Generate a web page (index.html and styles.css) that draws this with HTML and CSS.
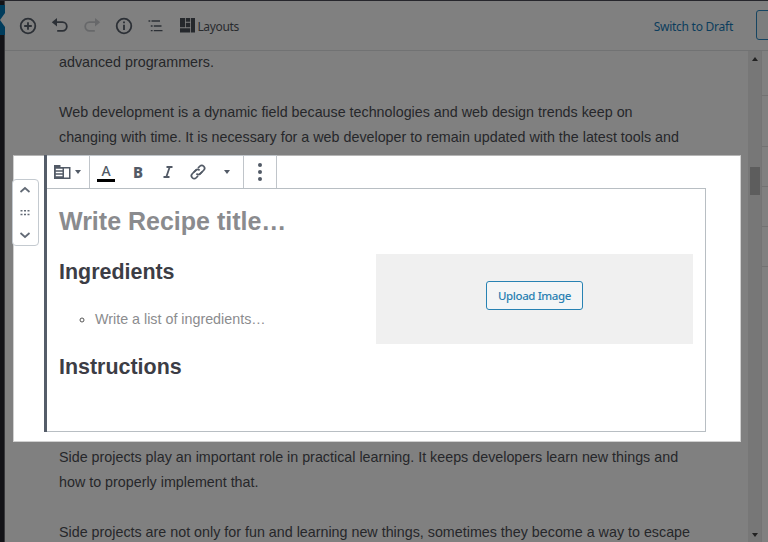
FILE: index.html
```html
<!DOCTYPE html>
<html lang="en">
<head>
<meta charset="utf-8">
<title>Edit Post</title>
<link rel="stylesheet" href="styles.css">
</head>
<body>
<div class="app">
  <div class="rail"><div class="rail-current"><i class="notch"></i></div></div>
  <div class="editor">
    <header class="topbar">
      <svg class="ico add" viewBox="0 0 18 18"><circle cx="9" cy="9" r="7.3"/><path d="M9 5.200v7.600M5.200 9h7.600"/></svg>
      <svg class="ico undo" viewBox="0 0 18 18"><path d="M5 5.200h6.500a4.100 4.100 0 0 1 0 8.600H6.200"/><path class="solid" d="M6 1v8.400L.8 5.200z"/></svg>
      <svg class="ico redo" viewBox="0 0 18 18"><path d="M13 5.200H6.500a4.100 4.100 0 0 0 0 8.600H11.800"/><path class="solid" d="M12 1v8.400l5.200-4.200z"/></svg>
      <svg class="ico info" viewBox="0 0 18 18"><circle cx="9" cy="9" r="7.300"/><path d="M9 7.800v5.300M9 4.500v1.800"/></svg>
      <svg class="ico outline" viewBox="0 0 18 18"><path d="M1.500 4h1.800M4.500 4h8.500M3.800 9h1.800M6.800 9h7.700M3.800 13.700h1.800M6.800 13.700h8.700"/></svg>
      <div class="layouts"><svg class="grid-ico" viewBox="0 0 15 15"><path d="M0 0h5v9.200H0zM5.800 0h4.400v3.800H5.800zM5.800 4.800h4.400v4.400H5.800zM0 10.200h10.200v4.300H0zM11 0h4v14.500h-4z"/></svg><span>Layouts</span></div>
      <span class="draft">Switch to Draft</span>
      <span class="preview"></span>
    </header>
    <div class="body">
      <main class="canvas">
        <p>advanced programmers.</p>
        <p>Web development is a dynamic field because technologies and web design trends keep on<br>changing with time. It is necessary for a web developer to remain updated with the latest tools and</p>
        <section class="spotlight">
          <div class="mover">
            <svg viewBox="0 0 12 8"><path d="M1.500 6L6 2l4.500 4"/></svg>
            <svg class="grip" viewBox="0 0 12 8"><path d="M1.500 1.800h2M5 1.800h2M8.500 1.800h2M1.500 5.500h2M5 5.500h2M8.500 5.500h2"/></svg>
            <svg viewBox="0 0 12 8"><path d="M1.500 2L6 6l4.500-4"/></svg>
          </div>
          <div class="block">
            <div class="toolbar">
              <div class="group type">
                <svg class="recipe" viewBox="0 0 17 15"><path class="solid" d="M0 0h6.500v2H16.500v12H0zM1.800 3.800v1.500h6.700V3.800zM1.800 6.800v1.500h6.700V6.800zM1.800 9.800v1.500h6.700V9.800zM10 3.500v9h5v-9z" fill-rule="evenodd"/></svg>
                <i class="caret"></i>
              </div>
              <div class="group format">
                <span class="color">A</span>
                <span class="bold">B</span>
                <svg class="italic" viewBox="0 0 10 12"><path d="M3.500 1h6M.5 11h6M6.700 1L3.300 11"/></svg>
                <svg class="link" viewBox="0 0 16 16"><g transform="rotate(-45 8 8)"><path d="M9 5.200H2.700a2.800 2.800 0 0 0 0 5.600h2.500M7 10.800h6.300a2.800 2.800 0 0 0 0-5.600h-2.500"/><path d="M5 5.200h2.600a2.800 2.800 0 0 1 2.700 2.800M11 10.800H8.400A2.800 2.800 0 0 1 5.700 8"/></g></svg>
                <i class="caret"></i>
              </div>
              <div class="group more"><i></i><i></i><i></i></div>
            </div>
            <div class="recipe-card">
              <h2 class="title">Write Recipe title…</h2>
              <div class="columns">
                <div class="text">
                  <h3>Ingredients</h3>
                  <ul><li>Write a list of ingredients…</li></ul>
                  <h3>Instructions</h3>
                </div>
                <div class="media"><span class="upload">Upload Image</span></div>
              </div>
            </div>
          </div>
        </section>
        <p>Side projects play an important role in practical learning. It keeps developers learn new things and<br>how to properly implement that.</p>
        <p>Side projects are not only for fun and learning new things, sometimes they become a way to escape</p>
      </main>
      <div class="scroll"><i class="up"></i><i class="thumb"></i><i class="down"></i></div>
      <aside class="side"><i></i><i></i><i></i><i></i><i></i></aside>
    </div>
  </div>
</div>
</body>
</html>
```
FILE: styles.css
```css
* { box-sizing: border-box; }
body { margin: 0; width: 768px; height: 542px; overflow: hidden; background: #808080; font-family: "Liberation Sans", Arial, sans-serif; }
svg { display: block; flex: none; overflow: visible; fill: none; stroke: currentColor; }
.solid { fill: currentColor; stroke: none; }

.app { display: flex; height: 542px; border-top: 1px solid #26262c; }
.rail { width: 5px; flex: none; background: #131317; border-right: 1px solid #38383b; padding-top: 4px; }
.rail-current { width: 5px; height: 30px; background: #003c5c; display: flex; align-items: center; justify-content: flex-end; }
.notch { border: 7px solid transparent; border-left: 0; border-right: 5px solid #808080; }
.editor { flex: 1; min-width: 0; display: flex; flex-direction: column; }

.topbar { height: 50px; flex: none; display: flex; align-items: center; border-bottom: 1px solid #717273; color: #2c3036; font: 13px "Noto Sans", sans-serif; padding-left: 14px; overflow: hidden; }
.ico { width: 18px; height: 18px; stroke-width: 1.8; margin-right: 14.100px; }
.redo { color: #67686a; }
.outline { stroke-width: 1.3; margin-right: 15px; }
.layouts { display: flex; align-items: center; gap: 2px; color: #292b2e; font-size: 12px; letter-spacing: -.350px; }
.layouts span, .draft { padding-top: 1px; }
.grid-ico { width: 15px; height: 15px; fill: #25282c; stroke: none; }
.draft { margin-left: auto; color: #0b3d5d; letter-spacing: -.250px; white-space: nowrap; font-size: 12px; }
.preview { width: 20px; height: 30px; flex: none; margin: -1px -8px 0 23px; border: 1px solid #164562; border-radius: 3px; background: #7c7e7e; }

.body { flex: 1; min-height: 0; display: flex; }
.canvas { width: 743px; flex: none; overflow: hidden; margin-top: -2px; padding-left: 54px; }
.canvas > p { margin: 0 0 25px; font-size: 14.300px; line-height: 25px; color: #26272a; white-space: nowrap; }
.canvas > p:first-child { padding-top: 1px; }
.canvas > p:nth-child(2) { margin-bottom: 5px; }

.spotlight { width: 728px; height: 287px; margin: 0 0 3px -46px; background: #fff; border: 1px solid #d0d0d0; border-top-color: #b5b5b5; display: flex; align-items: flex-start; }
.mover { width: 27px; height: 67px; margin: 23px 5px 0 -2px; border: 1px solid #c4cad0; border-radius: 4px; background: #fff; display: flex; flex-direction: column; align-items: center; justify-content: space-between; padding: 6px 0; color: #626a75; }
.mover svg { width: 12px; height: 8px; margin-right: 1px; stroke-width: 1.700; }
.mover .grip { stroke-width: 1.400; }
.block { width: 662px; height: 277px; margin-top: -1px; border-left: 3px solid #555d69; display: flex; flex-direction: column; }
.toolbar { display: flex; height: 33px; color: #525a66; }
.group { display: flex; align-items: center; border: 1px solid #c0c5ca; border-width: 1px 1px 0 0; }
.type { width: 43px; padding-left: 7px; gap: 4px; }
.recipe { width: 17px; height: 15px; }
.caret { border: 3px solid transparent; border-top: 4px solid currentColor; border-bottom: 0; }
.format { width: 154px; padding-left: 7px; }
.color { width: 18px; height: 18px; margin-top: 2px; border-bottom: 3px solid #000; font: 500 14px/13px "Noto Sans", sans-serif; text-align: center; }
.bold { margin-left: 18px; width: 10px; font: 800 15px/18px "Noto Sans", sans-serif; }
.italic { width: 10px; height: 12px; stroke-width: 1.800; margin: 0 17px 0 20px; }
.link { width: 16px; height: 16px; stroke-width: 1.700; margin-right: 18px; }
.more { width: 33px; flex-direction: column; justify-content: center; gap: 3px; }
.more i { width: 4px; height: 4px; border-radius: 50%; background: currentColor; }
.recipe-card { flex: 1; border: 1px solid #b8bec3; border-left-width: 0; padding: 15px 12px 0; color: #3c3d45; }
.title { margin: 0; font-size: 25px; line-height: 34px; color: #8a8b8e; }
.columns { display: flex; margin-top: 16px; }
.text { width: 317px; }
.text h3 { margin: 0; font-size: 21.450px; line-height: 36px; }
.text ul { margin: 17px 0 17px; padding-left: 36px; list-style: circle; font-size: 14.300px; line-height: 25px; color: #8b8c8e; }
.text li::marker { color: #555; }
.media { width: 317px; height: 90px; flex: none; background: #f0f0f0; display: flex; align-items: center; justify-content: center; padding-bottom: 7px; }
.upload { width: 97px; height: 29px; border: 1px solid #2782b3; border-radius: 3px; background: #f3f5f6; color: #2a80b2; font: 500 11.500px/27px "Noto Sans", sans-serif; letter-spacing: -.400px; text-align: center; white-space: nowrap; }

.scroll { width: 13px; flex: none; background: #777; display: flex; flex-direction: column; align-items: center; padding: 6px 0 5px; }
.up { border: 3.500px solid transparent; border-bottom: 4px solid #222; border-top: 0; }
.down { border: 3.500px solid transparent; border-top: 4px solid #222; border-bottom: 0; margin-top: auto; }
.thumb { width: 10px; height: 28px; margin-top: 106px; background: #5d5d5d; }
.side { flex: 1; border-left: 1px solid #747474; padding-top: 5px; }
.side i { display: block; height: 40px; border-bottom: 1px solid #727272; }
.side i:nth-child(2) { height: 51px; }
```
